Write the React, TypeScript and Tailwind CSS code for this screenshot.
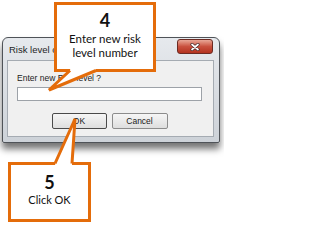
export default function App() {
  return (
    <div className="relative w-[224px] h-[227px] overflow-hidden bg-white font-['Liberation_Sans',Arial,sans-serif]">
      {/* dialog window */}
      <div className="pt-[37px] pl-[2px]">
        <div className="w-[218px] h-[106px] rounded-t-[6px] rounded-b-[2px] border border-[#4f5358] bg-gradient-to-b from-[#e6e9ed] to-[#cdd2d8] shadow-[0_6px_7px_rgba(0,0,0,0.55)] flex flex-col">
          <div className="h-[22px] flex items-start justify-between">
            <span className="ml-[6px] mt-[6px] w-[46px] overflow-hidden text-[9.5px] leading-[11px] text-[#1e1e1e] whitespace-nowrap">
              Risk level creation
            </span>
            <button className="mt-[1px] mr-[6px] w-[36px] h-[15px] rounded-[3px] border border-[#6b2a22] bg-gradient-to-b from-[#e8a797] via-[#c9513f] to-[#b3321e] flex items-center justify-center">
              <svg width="10" height="8" viewBox="0 0 10 8">
                <path d="M2 1.5 L8 6.5 M8 1.5 L2 6.5" stroke="#4a2a28" strokeWidth="3.2" strokeLinecap="round" />
                <path d="M2 1.5 L8 6.5 M8 1.5 L2 6.5" stroke="#ffffff" strokeWidth="1.7" strokeLinecap="round" />
              </svg>
            </button>
          </div>
          <div className="ml-[4px] mr-[5px] h-[77px] border border-[#a5abb2] bg-[#f0f0f0] pl-[9px] pr-[11px] pt-[11px]">
            <div className="text-[8.5px] leading-[13px] text-[#222] whitespace-nowrap">Enter new Risk level ?</div>
            <div className="mt-[2px] h-[14px] border border-[#9da2a8] bg-white" />
            <div className="mt-[12px] flex justify-center gap-[5px]">
              <button className="w-[55px] h-[16px] rounded-[2px] border border-[#4a4a4a] bg-gradient-to-b from-[#f6f6f6] to-[#dedede] text-[8.5px] leading-none text-[#1a1a1a]">
                OK
              </button>
              <button className="w-[56px] h-[16px] rounded-[2px] border border-[#8c8c8c] bg-gradient-to-b from-[#f6f6f6] to-[#dedede] text-[8.5px] leading-none text-[#1a1a1a]">
                Cancel
              </button>
            </div>
          </div>
        </div>
      </div>

      {/* callout 4 */}
      <div className="absolute left-[54px] top-[2px] w-[102px] h-[70px] border-[3px] border-[#e46c0a] bg-white flex flex-col items-center font-['Lato',sans-serif] text-[#111]">
        <div className="mt-[6px] text-[18px] leading-[18px] font-bold">4</div>
        <div className="mt-[3px] text-[11.5px] leading-[14px] text-center">
          Enter new risk
          <br />
          level number
        </div>
      </div>
      <svg className="absolute left-[44px] top-[64px]" width="60" height="30" viewBox="0 0 60 30">
        <polygon points="26.5,3 26,6.5 5,26 52,6.5 51.5,3" fill="#ffffff" />
        <polyline points="26,6.5 5,26 52,6.5" fill="none" stroke="#e46c0a" strokeWidth="3" />
      </svg>

      {/* callout 5 */}
      <div className="absolute left-[8px] top-[162px] w-[83px] h-[60px] border-[3px] border-[#e46c0a] bg-white flex flex-col items-center font-['Lato',sans-serif] text-[#111]">
        <div className="mt-[8px] text-[18px] leading-[18px] font-bold">5</div>
        <div className="mt-[2px] text-[11px] leading-[14px]">Click OK</div>
      </div>
      <svg className="absolute left-[50px] top-[115px]" width="30" height="52" viewBox="0 0 30 52">
        <polygon points="5.5,52 5,48.5 25,4 22,48.5 22,52" fill="#ffffff" />
        <polyline points="5,48.5 25,4 22,48.5" fill="none" stroke="#e46c0a" strokeWidth="3" />
      </svg>
    </div>
  );
}
